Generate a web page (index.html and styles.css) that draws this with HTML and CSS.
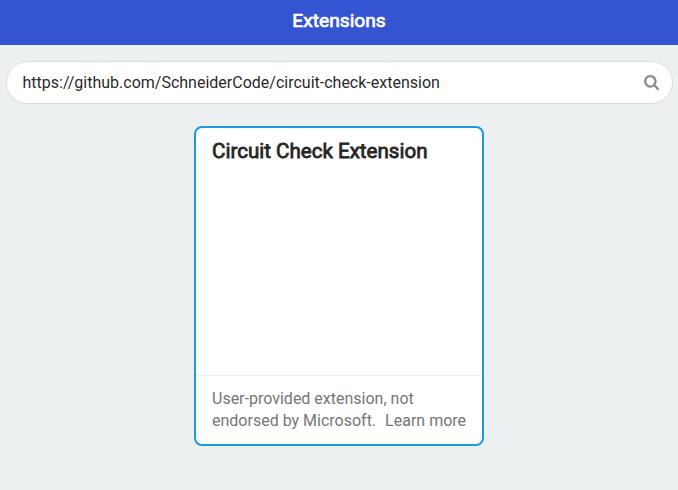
FILE: index.html
```html
<!DOCTYPE html>
<html lang="en">
<head>
<meta charset="utf-8">
<title>Extensions</title>
<link rel="stylesheet" href="styles.css">
</head>
<body>
<header class="header">Extensions</header>
<main class="content">
  <div class="search">
    <span class="query">https://github.com/SchneiderCode/circuit-check-extension</span>
    <svg class="search-icon" viewBox="0 0 1664 1664"><path d="M1152 704q0-185-131.500-316.500T704 256 387.500 387.500 256 704t131.500 316.500T704 1152t316.500-131.500T1152 704zm512 832q0 52-38 90t-90 38q-54 0-90-38l-343-342q-179 124-399 124-143 0-273.500-55.500t-225-150-150-225T0 704t55.500-273.500 150-225 225-150T704 0t273.500 55.500 225 150 150 225T1408 704q0 220-124 399l343 343q37 37 37 90z"/></svg>
  </div>
  <article class="card">
    <h2 class="title">Circuit Check Extension</h2>
    <div class="note">
      <div>User-provided extension, not</div>
      <div class="note-row"><span>endorsed by Microsoft.</span><a class="link">Learn more</a></div>
    </div>
  </article>
</main>
</body>
</html>
```

FILE: styles.css
```css
* { box-sizing: border-box; }
body {
  margin: 0;
  height: 490px;
  background: #ecf0f1;
  font: 16px/22px Roboto, sans-serif;
  color: rgba(0, 0, 0, .87);
}
.header {
  height: 45px;
  padding-top: 10px;
  background: #3454d1;
  color: #fff;
  font-size: 19.2px;
  -webkit-text-stroke: .7px;
  text-align: center;
}
.content { padding: 16px 5px 0 6px; }
.search {
  display: flex;
  align-items: center;
  justify-content: space-between;
  height: 43px;
  padding: 0 13.5px 0 15.5px;
  border: 1px solid #dadddd;
  border-radius: 22px;
  background: #fff;
}
.search-icon { width: 15px; height: 15px; fill: #8c8c8c; }
.card {
  display: flex;
  flex-direction: column;
  justify-content: space-between;
  width: 290px;
  height: 320px;
  margin: 22px 0 0 188px;
  border: 2px solid #1b9ae0;
  border-radius: 8px;
  background: #fff;
}
.title {
  margin: 12px 16px 0;
  font-size: 20.57px;
  line-height: 23px;
  font-weight: 400;
  color: #262626;
  -webkit-text-stroke: .8px;
}
.note {
  height: 69px;
  padding: 12px 12px 0 16px;
  border-top: 1px solid #eee;
  color: #767676;
}
.note-row { display: flex; gap: 9px; }
```
